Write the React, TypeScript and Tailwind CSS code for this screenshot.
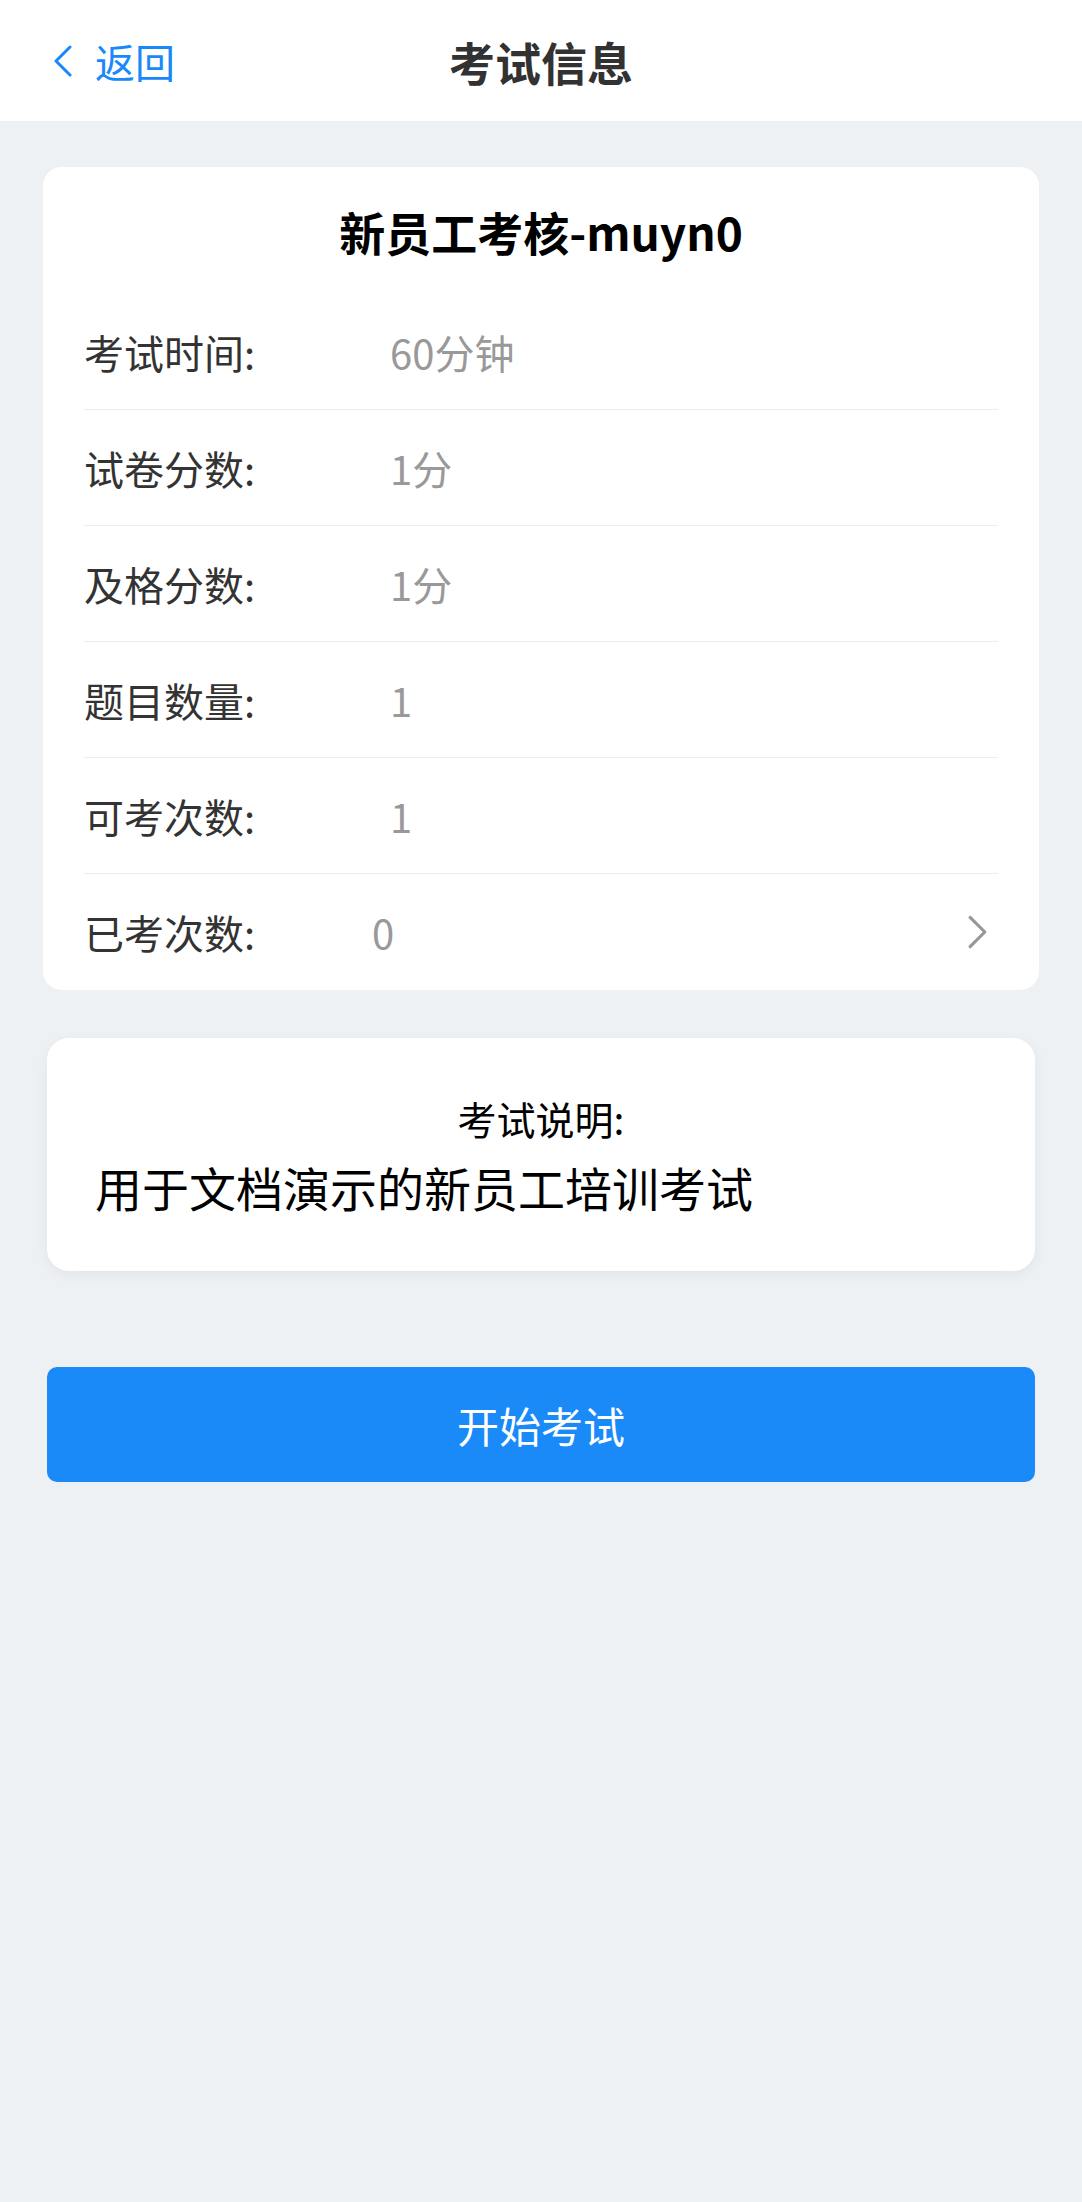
const rows = [
    { label: '考试时间:', value: '60分钟' },
    { label: '试卷分数:', value: '1分' },
    { label: '及格分数:', value: '1分' },
    { label: '题目数量:', value: '1' },
    { label: '可考次数:', value: '1' },
];

function Chevron({ dir, className }: { dir: 'left' | 'right'; className?: string }) {
    return (
        <svg
            viewBox="0 0 20 32"
            className={className}
            fill="none"
            stroke="currentColor"
            strokeWidth={3}
            strokeLinecap="round"
            strokeLinejoin="round"
            aria-hidden="true"
        >
            {dir === 'left' ? (
                <polyline points="17,2 3,16 17,30" />
            ) : (
                <polyline points="3,2 17,16 3,30" />
            )}
        </svg>
    );
}

export default function App() {
    return (
        <div className="min-h-[2202px] bg-[#eef1f4] font-['Noto_Sans_CJK_SC','Noto_Sans',sans-serif]">
            {/* Nav bar */}
            <header className="relative flex h-[121px] items-center justify-center bg-white">
                <button
                    type="button"
                    className="absolute left-[53px] top-0 flex h-full items-center gap-[22px] text-[#1989fa]"
                >
                    <Chevron dir="left" className="h-[32px] w-[20px]" />
                    <span className="text-[40px] leading-none">返回</span>
                </button>
                <h1 className="text-[46px] font-bold leading-none text-[#323233]">
                    考试信息
                </h1>
            </header>

            <main className="flex flex-col">
                {/* Info card */}
                <section className="mx-[43px] mt-[46px] rounded-[19px] bg-white">
                    <div className="flex h-[127px] items-center justify-center">
                        <h2 className="text-[46px] font-bold leading-none text-black">
                            新员工考核-muyn0
                        </h2>
                    </div>

                    <div className="px-[41px]">
                        {rows.map((row) => (
                            <div
                                key={row.label}
                                className="flex h-[116px] items-center border-b-[1.5px] border-[#ebedf0]"
                            >
                                <span className="w-[306px] text-[40px] leading-none text-[#333]">
                                    {row.label}
                                </span>
                                <span className="text-[40px] leading-none text-[#999]">
                                    {row.value}
                                </span>
                            </div>
                        ))}
                        <div className="flex h-[116px] items-center">
                            <span className="w-[288px] text-[40px] leading-none text-[#333]">
                                已考次数:
                            </span>
                            <span className="flex-1 text-[40px] leading-none text-[#999]">
                                0
                            </span>
                            <Chevron
                                dir="right"
                                className="mr-[10px] h-[34px] w-[21px] text-[#969799]"
                            />
                        </div>
                    </div>
                </section>

                {/* Description card */}
                <section className="mx-[47px] mt-[48px] rounded-[22px] bg-white px-[48px] pb-[54px] pt-[55px] shadow-[0_4px_14px_rgba(0,0,0,0.05)]">
                    <p className="text-center text-[39px] leading-[50px] text-black">
                        考试说明:
                    </p>
                    <p className="mt-[14px] text-[47px] leading-[60px] text-black">
                        用于文档演示的新员工培训考试
                    </p>
                </section>

                {/* Start button */}
                <button
                    type="button"
                    className="mx-[47px] mt-[96px] flex h-[115px] items-center justify-center rounded-[10px] bg-[#1a8af9] text-[42px] text-white"
                >
                    开始考试
                </button>
            </main>
        </div>
    );
}
